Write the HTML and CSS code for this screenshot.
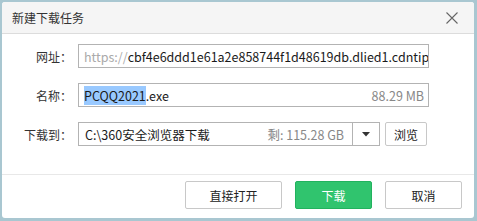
FILE: index.html
```html
<!DOCTYPE html>
<html lang="zh-CN">
<head>
<meta charset="utf-8">
<link rel="stylesheet" href="styles.css">
</head>
<body>
<div class="window">
  <div class="titlebar">
    <span class="title">新建下载任务</span>
    <svg class="close" width="12" height="12" viewBox="0 0 12 12"><path d="M0.5 0.5L11.5 11.5M11.5 0.5L0.5 11.5" stroke="#666" stroke-width="1.1" fill="none"/></svg>
  </div>
  <div class="form">
    <div class="row">
      <label class="label">网址：</label>
      <div class="field url"><span class="proto">https://</span><span class="host">cbf4e6ddd1e61a2e858744f1d48619db.dlied1.cdntip</span></div>
    </div>
    <div class="row">
      <label class="label">名称：</label>
      <div class="field name"><span><span class="sel">PCQQ2021</span>.exe</span><span class="size">88.29 MB</span></div>
    </div>
    <div class="row">
      <label class="label">下载到：</label>
      <div class="pathgroup">
        <div class="field path"><span>C:\360安全浏览器下载</span><span class="size">剩: 115.28 GB</span></div>
        <div class="drop"><svg width="8" height="5" viewBox="0 0 8 5"><path d="M0 0H8L4 4.5Z" fill="#333"/></svg></div>
      </div>
      <button class="btn small">浏览</button>
    </div>
  </div>
  <div class="footer">
    <button class="btn">直接打开</button>
    <button class="btn primary">下载</button>
    <button class="btn">取消</button>
  </div>
</div>
</body>
</html>
```
FILE: styles.css
```css
html, body {
  margin: 0;
  padding: 0;
}
body {
  width: 477px;
  height: 221px;
  background: #a9c7d1;
  font-family: "Noto Sans CJK SC", "Open Sans", sans-serif;
  font-size: 12px;
  color: #333;
  overflow: hidden;
}
.window {
  margin: 2px 3px 3px 2px;
  height: 216px;
  background: #fff;
  border-radius: 3px;
  overflow: hidden;
  display: flex;
  flex-direction: column;
}
.titlebar {
  height: 31px;
  background: #f5f5f5;
  border-bottom: 1px solid #dcdcdc;
  display: flex;
  align-items: center;
  justify-content: space-between;
  padding: 0 16px 0 10px;
  flex: none;
}
.title {
  font-size: 12px;
  color: #333;
  line-height: 1;
}
.close {
  display: block;
}
.form {
  padding: 10px 0 0 0;
  display: flex;
  flex-direction: column;
  gap: 15px;
  height: 130px;
  border-bottom: 1px solid #e8e8e8;
  flex: none;
}
.row {
  display: flex;
  align-items: center;
  height: 24px;
}
.label {
  width: 70px;
  text-align: right;
  padding-right: 6px;
  flex: none;
  color: #333;
}
.field {
  box-sizing: border-box;
  height: 24px;
  border: 1px solid #b3b3b3;
  display: flex;
  align-items: center;
  justify-content: space-between;
  padding: 0 4px 0 5px;
  white-space: nowrap;
  overflow: hidden;
  color: #1a1a1a;
  font-size: 12.5px;
}
.url, .name {
  width: 351px;
}
.url {
  justify-content: flex-start;
}
.proto {
  color: #aaa;
}
.sel {
  background: #99c9ff;
}
.size {
  color: #888;
}
.pathgroup {
  display: flex;
  width: 302px;
  height: 24px;
  box-sizing: border-box;
  border: 1px solid #b3b3b3;
  flex: none;
}
.path {
  border: none;
  flex: 1;
  height: 22px;
  padding-left: 6px;
  padding-right: 8px;
}
.drop {
  width: 26px;
  border-left: 1px solid #b3b3b3;
  display: flex;
  align-items: center;
  justify-content: center;
}
.btn {
  font-family: inherit;
  font-size: 12px;
  color: #222;
  background: #fff;
  border: 1px solid #c8c8c8;
  border-radius: 2px;
  box-sizing: border-box;
  height: 28px;
  width: 77px;
  padding: 0;
}
.btn.small {
  width: 42px;
  height: 24px;
  margin-left: 5px;
}
.btn.primary {
  background: #30c46e;
  border-color: #22b25e;
  color: #fff;
}
.footer {
  display: flex;
  justify-content: flex-end;
  gap: 13px;
  padding: 6px 12px 0 0;
}
.footer .btn:first-child {
  width: 97px;
}
```
